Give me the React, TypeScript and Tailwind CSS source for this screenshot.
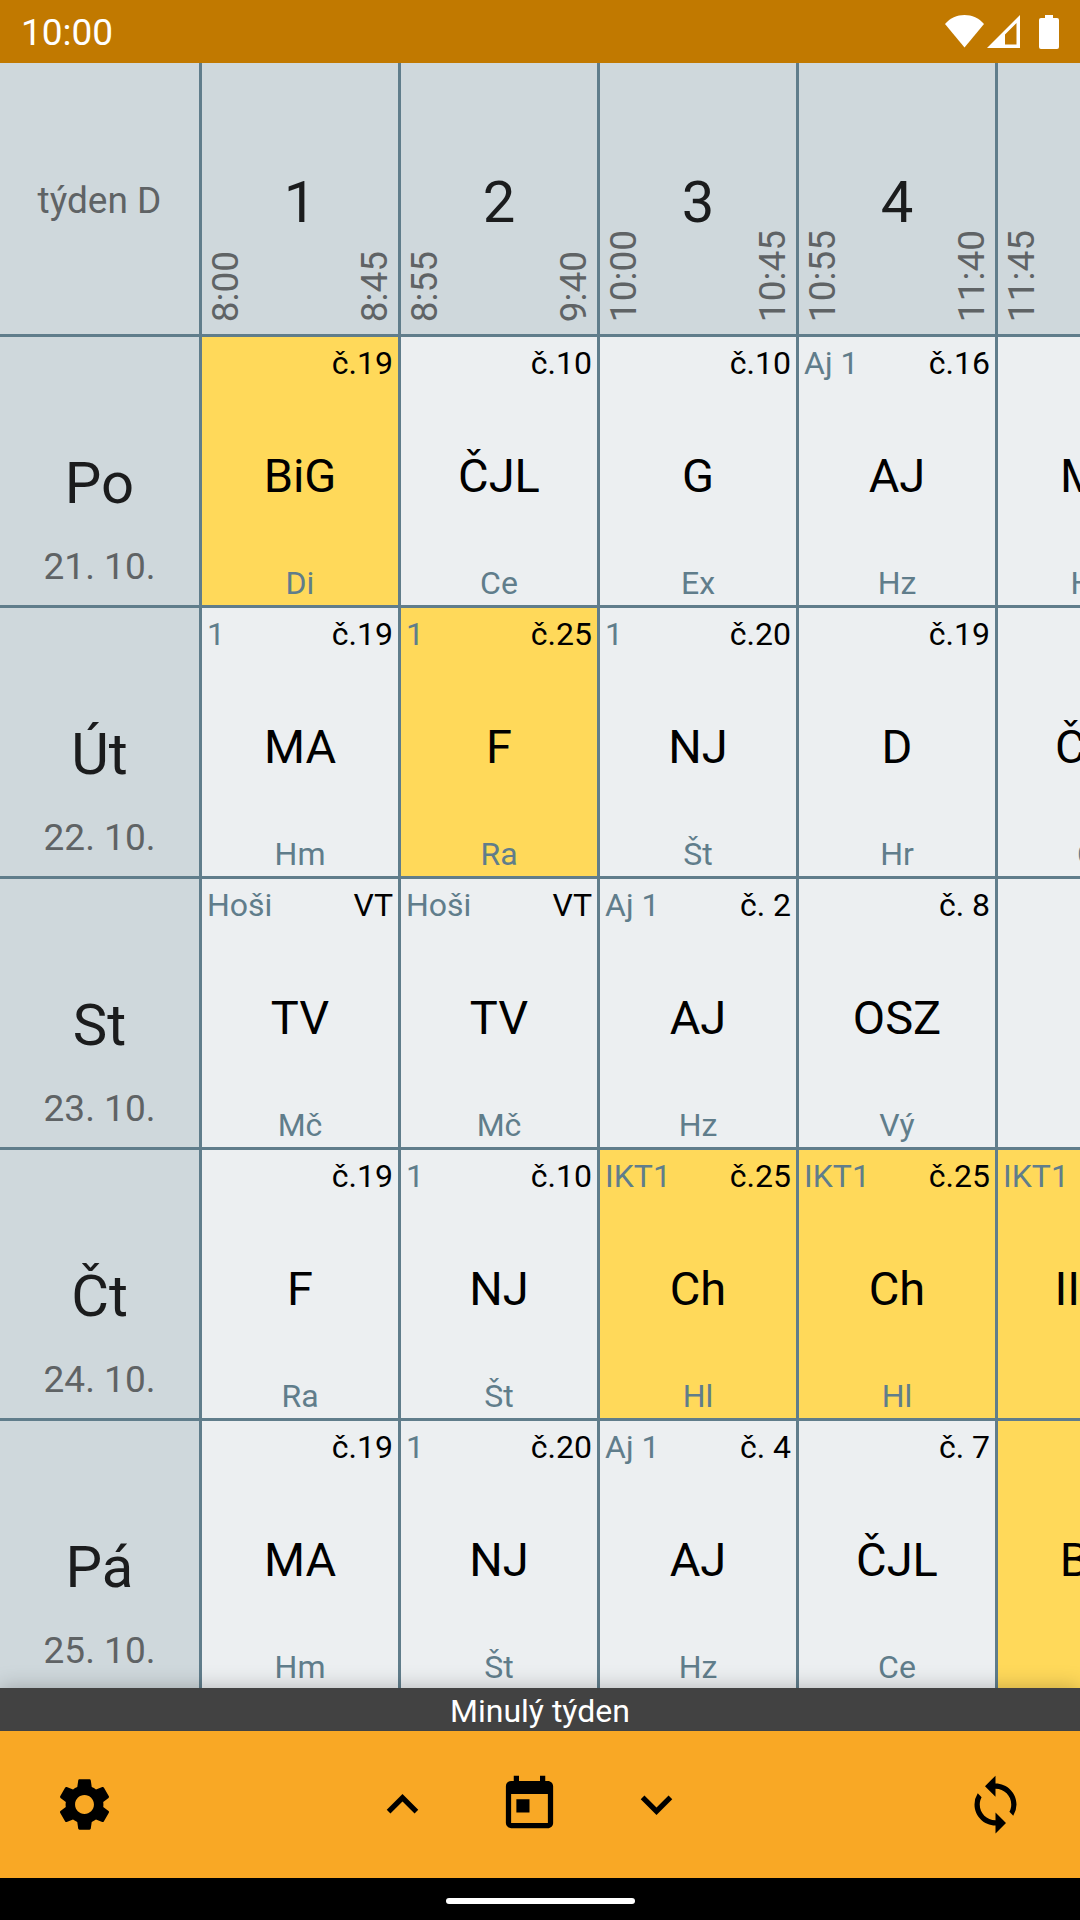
import { MdKeyboardArrowDown, MdKeyboardArrowUp, MdSettings, MdSync, MdToday } from "react-icons/md";

type Lesson = { subject: string; room: string; teacher: string; group?: string; changed?: boolean };
type Day = { name: string; date: string; lessons: (Lesson | null)[] };

const hours = [
  { label: "1", from: "8:00", to: "8:45" },
  { label: "2", from: "8:55", to: "9:40" },
  { label: "3", from: "10:00", to: "10:45" },
  { label: "4", from: "10:55", to: "11:40" },
  { label: "5", from: "11:45", to: "12:30" },
];

const days: Day[] = [
  {
    name: "Po",
    date: "21. 10.",
    lessons: [
      { subject: "BiG", room: "č.19", teacher: "Di", changed: true },
      { subject: "ČJL", room: "č.10", teacher: "Ce" },
      { subject: "G", room: "č.10", teacher: "Ex" },
      { subject: "AJ", room: "č.16", teacher: "Hz", group: "Aj 1" },
      { subject: "MA", room: "č.19", teacher: "Hm" },
    ],
  },
  {
    name: "Út",
    date: "22. 10.",
    lessons: [
      { subject: "MA", room: "č.19", teacher: "Hm", group: "1" },
      { subject: "F", room: "č.25", teacher: "Ra", group: "1", changed: true },
      { subject: "NJ", room: "č.20", teacher: "Št", group: "1" },
      { subject: "D", room: "č.19", teacher: "Hr" },
      { subject: "ČJL", room: "č.19", teacher: "Ce" },
    ],
  },
  {
    name: "St",
    date: "23. 10.",
    lessons: [
      { subject: "TV", room: "VT", teacher: "Mč", group: "Hoši" },
      { subject: "TV", room: "VT", teacher: "Mč", group: "Hoši" },
      { subject: "AJ", room: "č. 2", teacher: "Hz", group: "Aj 1" },
      { subject: "OSZ", room: "č. 8", teacher: "Vý" },
      null,
    ],
  },
  {
    name: "Čt",
    date: "24. 10.",
    lessons: [
      { subject: "F", room: "č.19", teacher: "Ra" },
      { subject: "NJ", room: "č.10", teacher: "Št", group: "1" },
      { subject: "Ch", room: "č.25", teacher: "Hl", group: "IKT1", changed: true },
      { subject: "Ch", room: "č.25", teacher: "Hl", group: "IKT1", changed: true },
      { subject: "IIKT", room: "č.25", teacher: "Hl", group: "IKT1", changed: true },
    ],
  },
  {
    name: "Pá",
    date: "25. 10.",
    lessons: [
      { subject: "MA", room: "č.19", teacher: "Hm" },
      { subject: "NJ", room: "č.20", teacher: "Št", group: "1" },
      { subject: "AJ", room: "č. 4", teacher: "Hz", group: "Aj 1" },
      { subject: "ČJL", room: "č. 7", teacher: "Ce" },
      { subject: "BiG", room: "č.19", teacher: "Di", changed: true },
    ],
  },
];

function StatusBar() {
  return (
    <header className="flex h-[63px] shrink-0 items-center justify-between bg-[#c17900] px-[21px] text-[37px] text-white">
      <time className="pt-[3px]">10:00</time>
      <svg className="h-[34px] w-[114px]" viewBox="0 0 114 34" fill="currentColor" aria-label="Wi-Fi, signál, baterie">
        <path d="M0 9C5 3 12 0 19.500 0S34 3 39 9L19.500 32.500z" />
        <path fillRule="evenodd" d="M42 33 75 0V33zM60 19.500V29.500H71.500V8z" />
        <path d="M100 0h8v3h4a2 2 0 0 1 2 2v27a2 2 0 0 1-2 2H96a2 2 0 0 1-2-2V5a2 2 0 0 1 2-2h4z" />
      </svg>
    </header>
  );
}

function LessonCell({ lesson }: { lesson: Lesson | null }) {
  const background = lesson?.changed ? "bg-[#ffd95a]" : "bg-[#eceff1]";
  return (
    <td className={`h-[271px] border-t-3 border-l-3 border-[#607d8b] p-0 ${background}`}>
      {lesson && (
        <div className="flex h-[268px] flex-col px-[5px] pt-1 pb-[3px] text-[32px] text-[#607d8b]">
          <div className="flex justify-between leading-[44px]">
            <span>{lesson.group}</span>
            <span className="text-black">{lesson.room}</span>
          </div>
          <div className="flex flex-1 items-center justify-center pt-1 text-[47px] text-black">{lesson.subject}</div>
          <div className="text-center leading-[38px]">{lesson.teacher}</div>
        </div>
      )}
    </td>
  );
}

function Timetable() {
  return (
    <main className="h-[1625px] flex-1 overflow-hidden bg-[#eceff1]">
      <table className="w-[1194px] table-fixed border-separate border-spacing-0">
        <thead>
          <tr className="bg-[#cfd8dc]">
            <th className="h-[271px] p-0 pt-1 text-center text-[37px] font-normal text-[#5f6365]">týden D</th>
            {hours.map((hour) => (
              <th key={hour.label} scope="col" className="border-l-3 border-[#607d8b] p-0 font-normal">
                <div className="flex h-[271px] items-end justify-between px-[2px] pb-3 text-[37px] leading-[43px] text-[#5f6365]">
                  <time className="rotate-180 [writing-mode:vertical-rl]">{hour.from}</time>
                  <span className="self-center pt-5 text-[58px] text-[#1b1c1d]">{hour.label}</span>
                  <time className="rotate-180 [writing-mode:vertical-rl]">{hour.to}</time>
                </div>
              </th>
            ))}
          </tr>
        </thead>
        <tbody>
          {days.map((day) => (
            <tr key={day.name}>
              <th scope="row" className="border-t-3 border-[#607d8b] bg-[#cfd8dc] p-0 font-normal">
                <div className="flex h-[268px] flex-col items-center justify-end pb-4">
                  <span className="text-[58px] leading-[68px] text-[#1b1c1d]">{day.name}</span>
                  <span className="mt-[28px] text-[37px] leading-[44px] text-[#5f6365]">{day.date}</span>
                </div>
              </th>
              {day.lessons.map((lesson, index) => (
                <LessonCell key={index} lesson={lesson} />
              ))}
            </tr>
          ))}
        </tbody>
      </table>
    </main>
  );
}

const actionClass = "flex h-[126px] w-[127px] items-center justify-center";

function BottomBar() {
  return (
    <footer className="relative shrink-0 shadow-[0_0_20px_rgba(0,0,0,0.25)]">
      <p className="bg-[#424242] pt-[3px] text-center text-[32px] leading-[40px] text-white">Minulý týden</p>
      <nav className="flex h-[147px] items-center justify-between bg-[#f9a825] px-[21px] text-[63px] text-black">
        <button type="button" aria-label="Nastavení" className={actionClass}>
          <MdSettings />
        </button>
        <div className="mr-[21px] flex">
          <button type="button" aria-label="Předchozí týden" className={actionClass}>
            <MdKeyboardArrowUp />
          </button>
          <button type="button" aria-label="Aktuální týden" className={actionClass}>
            <MdToday />
          </button>
          <button type="button" aria-label="Další týden" className={actionClass}>
            <MdKeyboardArrowDown />
          </button>
        </div>
        <button type="button" aria-label="Obnovit" className={actionClass}>
          <MdSync />
        </button>
      </nav>
      <div className="flex h-[42px] justify-center bg-black pt-5">
        <div className="h-[6px] w-[189px] rounded-full bg-white" />
      </div>
    </footer>
  );
}

export default function App() {
  return (
    <div className="flex h-screen flex-col overflow-hidden font-['Roboto',sans-serif]">
      <StatusBar />
      <Timetable />
      <BottomBar />
    </div>
  );
}
